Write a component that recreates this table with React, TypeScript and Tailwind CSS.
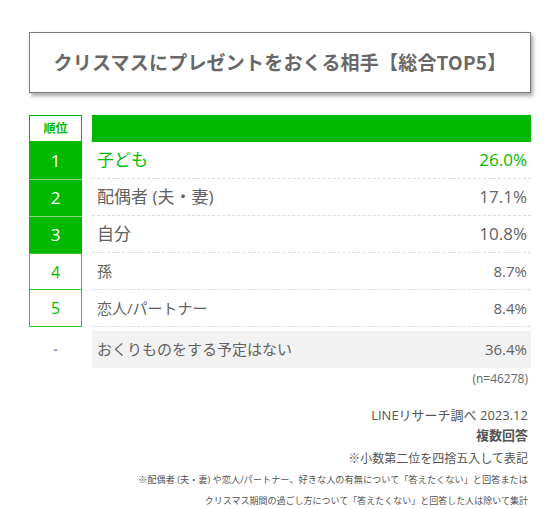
const rows = [
  { rank: "1", label: "子ども", value: "26.0%", top: true, highlight: true },
  { rank: "2", label: "配偶者 (夫・妻)", value: "17.1%", top: true },
  { rank: "3", label: "自分", value: "10.8%", top: true },
  { rank: "4", label: "孫", value: "8.7%", top: false },
  { rank: "5", label: "恋人/パートナー", value: "8.4%", top: false },
];

const font = "font-['Open_Sans','Noto_Sans_CJK_JP',sans-serif]";

const App = () => {
  return (
    <div className={`w-[560px] h-[509px] bg-white pt-[32px] px-[29px] ${font}`}>
      <div className="h-[61px] w-[502px] border-[1.5px] border-[#7a7a7a] bg-white shadow-[2px_3px_4px_rgba(0,0,0,0.35)] flex items-center justify-center">
        <h1 className="text-[19px] font-bold text-[#686868] font-['Noto_Sans_CJK_JP',sans-serif] tracking-[0.2px]">
          クリスマスにプレゼントをおくる相手【総合TOP5】
        </h1>
      </div>

      <div className="mt-[22px] flex w-[502px]">
        <div className="w-[53px] flex flex-col">
          <div className="h-[27px] border border-[#00b900] bg-white flex items-center justify-center text-[12px] font-bold text-[#00b900]">
            順位
          </div>
          {rows.map((item, idx) =>
            item.top ? (
              <div
                key={item.rank}
                className={`h-[37px] bg-[#00b900] flex items-center justify-center text-[17px] text-white ${idx > 0 ? "border-t border-[#86dc86]" : ""}`}
              >
                {item.rank}
              </div>
            ) : (
              <div
                key={item.rank}
                className={`h-[37px] bg-white border border-[#2fc32f] flex items-center justify-center text-[16px] text-[#00b900] ${idx === 4 ? "border-t-0" : ""}`}
              >
                {item.rank}
              </div>
            )
          )}
        </div>

        <div className="ml-[10px] flex-1 flex flex-col">
          <div className="h-[27px] bg-[#00b900]"></div>
          {rows.map((item) => (
            <div
              key={item.rank}
              className={`h-[37px] flex items-center justify-between pl-[5px] pr-[4px] border-b border-dashed border-[#dcdcdc] ${item.highlight ? "text-[#00b900]" : "text-[#626262]"} ${item.top ? "text-[17px]" : "text-[15px]"}`}
            >
              <span>{item.label}</span>
              <span>{item.value}</span>
            </div>
          ))}
        </div>
      </div>

      <div className="mt-[4px] flex w-[502px]">
        <div className="w-[53px] flex items-center justify-center text-[13px] font-bold text-[#7f8bc6]">-</div>
        <div className="ml-[10px] flex-1 h-[37px] bg-[#f2f2f2] flex items-center justify-between pl-[5px] pr-[4px] text-[15px] text-[#626262]">
          <span>おくりものをする予定はない</span>
          <span>36.4%</span>
        </div>
      </div>

      <div className="w-[502px] flex flex-col items-end pr-[3px] text-[#555555]">
        <p className="mt-[4px] text-[12px] leading-[14px] text-[#666666]">(n=46278)</p>
        <p className="mt-[19px] text-[13px] leading-[20px]">LINEリサーチ調べ 2023.12</p>
        <p className="text-[13px] leading-[20px] font-bold">複数回答</p>
        <p className="mt-[4px] text-[12px] leading-[20px]">※小数第二位を四捨五入して表記</p>
        <p className="text-[9.2px] leading-[21px] whitespace-nowrap">
          ※配偶者 (夫・妻) や恋人/パートナー、好きな人の有無について「答えたくない」と回答または
        </p>
        <p className="text-[9px] leading-[21px] whitespace-nowrap">
          クリスマス期間の過ごし方について「答えたくない」と回答した人は除いて集計
        </p>
      </div>
    </div>
  );
};

export default App;
